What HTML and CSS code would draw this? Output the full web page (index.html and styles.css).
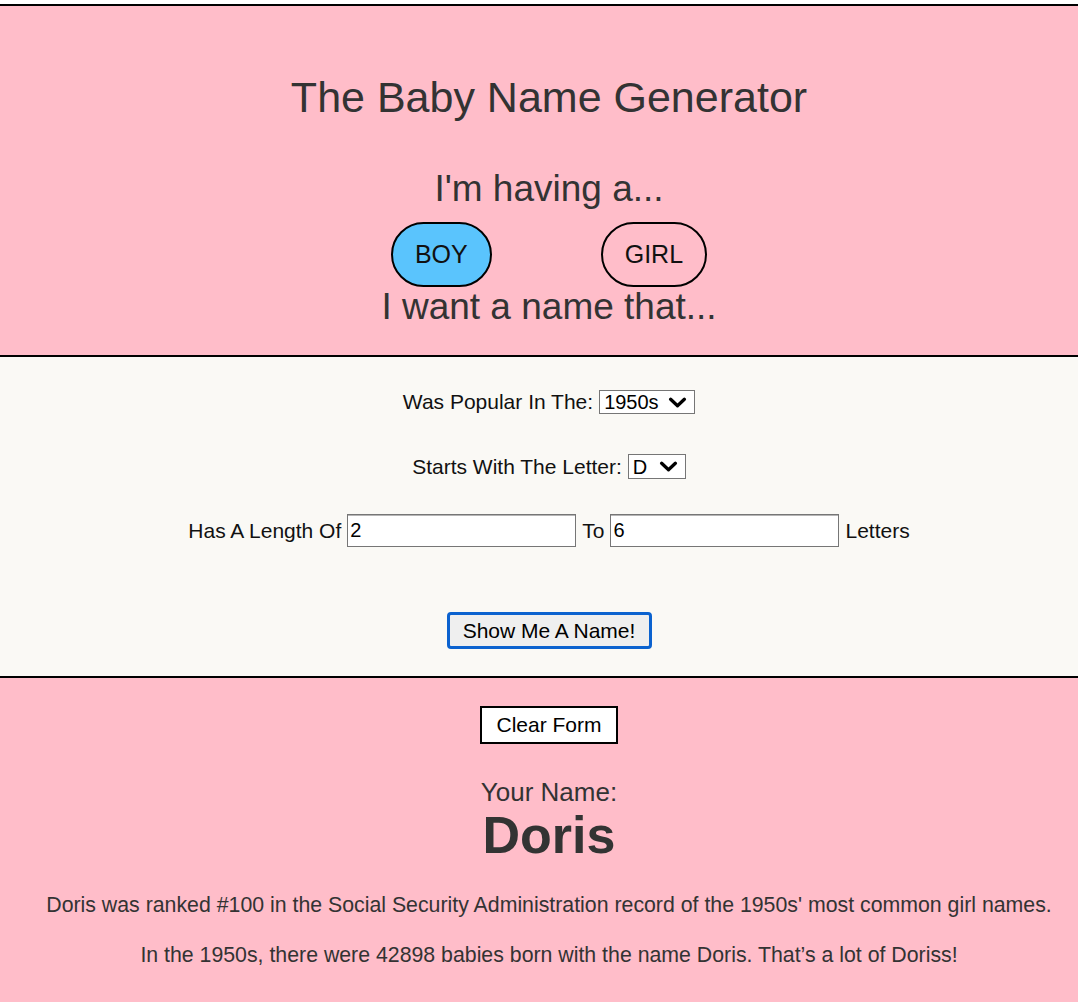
FILE: index.html
```html
<!DOCTYPE html>
<html>
  <head>
    <title>The Baby Name Generator</title>
    <link rel="stylesheet" href="styles.css">
  </head>
  <body>
    <div class="intro">
      <h1 class="title">The Baby Name Generator</h1>
      <h2 class="prompt prompt-first">I'm having a...</h2>
      <div class="gender-row">
        <button class="gender-button active">BOY</button>
        <button class="gender-button">GIRL</button>
      </div>
      <h2 class="prompt prompt-second">I want a name that...</h2>
    </div>

    <div class="form-area">
      <div class="form-row row-decade">
        <label for="decade">Was Popular In The:</label>
        <select id="decade" class="picker picker-decade">
          <option>1950s</option>
        </select>
      </div>
      <div class="form-row row-letter">
        <label for="letter">Starts With The Letter:</label>
        <select id="letter" class="picker picker-letter">
          <option>D</option>
        </select>
      </div>
      <div class="form-row row-length">
        <span>Has A Length Of</span>
        <input type="text" class="length-input" value="2" />
        <span>To</span>
        <input type="text" class="length-input" value="6" />
        <span>Letters</span>
      </div>
      <button class="show-button">Show Me A Name!</button>
    </div>

    <div class="result">
      <button class="clear-button">Clear Form</button>
      <div class="your-name">Your Name:</div>
      <div class="baby-name">Doris</div>
      <p class="fact fact-rank">Doris was ranked #100 in the Social Security Administration record of the 1950s' most common girl names.</p>
      <p class="fact fact-count">In the 1950s, there were 42898 babies born with the name Doris. That’s a lot of Doriss!</p>
    </div>
  </body>
</html>
```

FILE: styles.css
```css
body {
  margin: 0;
  padding-top: 4px;
  font-family: "Liberation Sans", Arial, Helvetica, sans-serif;
  background-color: #fff;
}

/* top pink block */
.intro {
  background-color: #ffbdc9;
  border-top: 2px solid #000;
  padding: 66px 0 27px 20px;
  text-align: center;
  color: #333;
}
.title {
  margin: 0;
  font-size: 43px;
  line-height: 50px;
  font-weight: normal;
}
.prompt {
  margin: 0;
  font-size: 37px;
  line-height: 42px;
  font-weight: normal;
}
.prompt-first {
  margin-top: 46px;
}
.prompt-second {
  margin-top: -1px;
}
.gender-row {
  display: flex;
  justify-content: center;
  gap: 109px;
  margin-top: 12px;
}
.gender-button {
  box-sizing: border-box;
  height: 65px;
  padding: 0 22px;
  border: 2px solid #000;
  border-radius: 33px;
  background-color: transparent;
  font-family: inherit;
  font-size: 25px;
  color: #111;
}
.gender-button.active {
  background-color: #5ac4fd;
}

/* middle form block */
.form-area {
  background-color: #faf9f5;
  border-top: 2px solid #000;
  border-bottom: 2px solid #000;
  padding: 33px 0 27px 20px;
  display: flex;
  flex-direction: column;
  align-items: center;
  font-size: 21px;
  color: #111;
}
.form-row {
  display: flex;
  align-items: center;
  gap: 6px;
}
.row-letter {
  margin-top: 40px;
}
.row-length {
  margin-top: 35px;
}
.picker {
  -webkit-appearance: none;
  appearance: none;
  box-sizing: border-box;
  height: 24px;
  padding: 0 0 0 4px;
  border: 1px solid #767676;
  border-radius: 0;
  background-color: #fff;
  background-image: url("data:image/svg+xml;utf8,<svg xmlns='http://www.w3.org/2000/svg' viewBox='0 0 20 12'><path d='M2.5 2.5l7.5 7 7.5-7' fill='none' stroke='black' stroke-width='3.6' stroke-linecap='round' stroke-linejoin='round'/></svg>");
  background-repeat: no-repeat;
  background-size: 19px 11px;
  background-position: right 7px center;
  font-family: inherit;
  font-size: 20px;
  color: #000;
}
.picker-decade {
  width: 96px;
}
.picker-letter {
  width: 58px;
  height: 25px;
}
.length-input {
  box-sizing: border-box;
  width: 229px;
  height: 33px;
  padding: 0 2px;
  border: 1px solid #767676;
  box-shadow: inset 0 1px 0 #b5b5b5;
  background-color: #fff;
  font-family: inherit;
  font-size: 20px;
  color: #000;
}
.show-button {
  margin-top: 65px;
  box-sizing: border-box;
  width: 205px;
  height: 37px;
  border: 3px solid #0b62cf;
  border-radius: 4px;
  background-color: #efefef;
  font-family: inherit;
  font-size: 21px;
  color: #000;
}

/* bottom pink block */
.result {
  background-color: #ffbdc9;
  padding: 28px 0 40px 20px;
  text-align: center;
  color: #333;
}
.clear-button {
  box-sizing: border-box;
  width: 138px;
  height: 38px;
  border: 2px solid #000;
  background-color: #fff;
  font-family: inherit;
  font-size: 21px;
  color: #000;
}
.your-name {
  margin-top: 34px;
  font-size: 26px;
  line-height: 28px;
}
.baby-name {
  font-size: 52px;
  line-height: 58px;
  font-weight: bold;
}
.fact {
  margin: 0;
  font-size: 21.3px;
  line-height: 23px;
}
.fact-rank {
  margin-top: 30px;
}
.fact-count {
  margin-top: 27px;
}
```
